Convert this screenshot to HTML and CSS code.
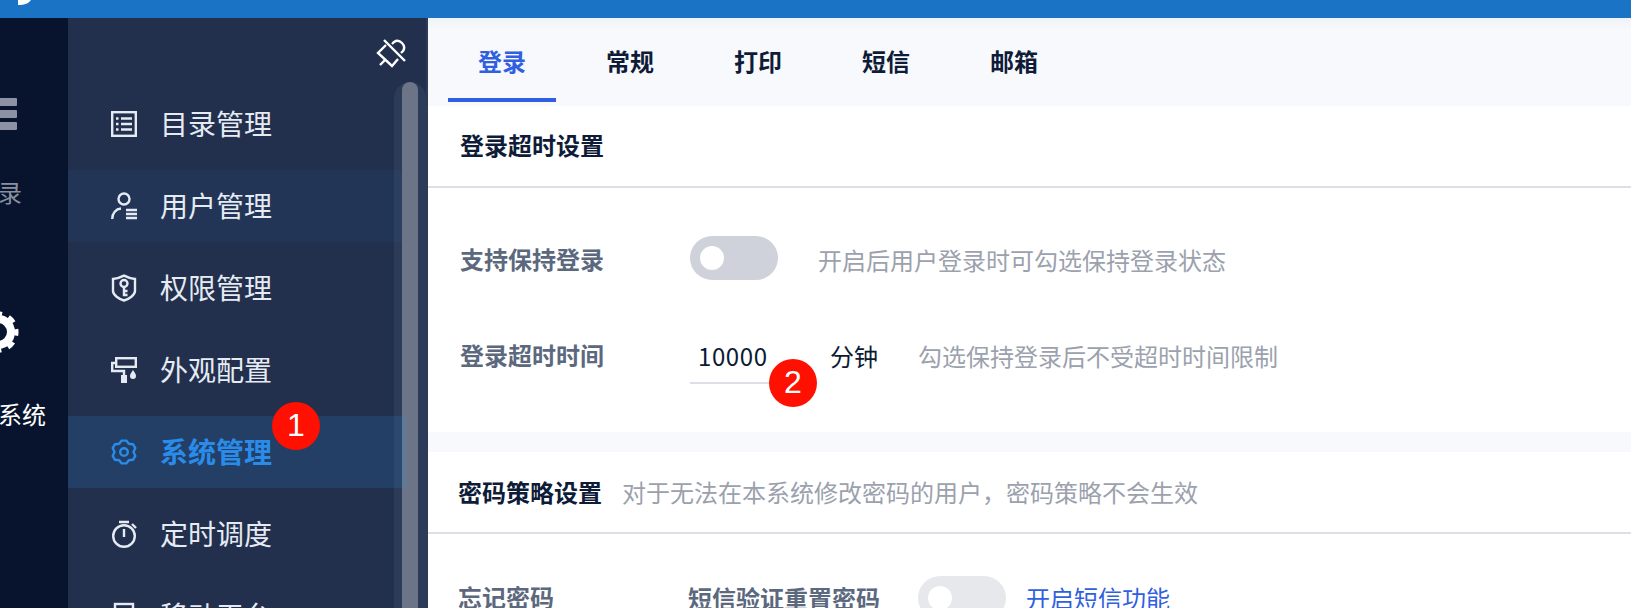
FILE: index.html
```html
<!DOCTYPE html>
<html lang="zh-CN">
<head>
    <meta charset="UTF-8">
    <meta name="viewport" content="width=device-width, initial-scale=1.0">
    <title>系统管理</title>
    <link rel="stylesheet" href="styles.css">
</head>
<body>
    <header class="topbar">
        <svg class="logo" width="14" height="6" viewBox="0 0 14 6"><path d="M0 0H13C11 3 7 5 0 5Z" fill="#fff"/></svg>
    </header>

    <div class="layout">
        <nav class="rail">
            <div class="rail-item">
                <svg width="38" height="32" viewBox="0 0 38 32" fill="#8c92a3">
                    <rect width="38" height="8" rx="1"/>
                    <rect y="12" width="38" height="8" rx="1"/>
                    <rect y="24" width="38" height="8" rx="1"/>
                </svg>
                <span class="rail-label">目录</span>
            </div>
            <div class="rail-item rail-item-active">
                <svg width="44" height="44" viewBox="0 0 44 44" fill="none" stroke="#fff">
                    <circle cx="22" cy="22" r="13" stroke-width="8"/>
                    <circle cx="22" cy="22" r="18.5" stroke-width="4" stroke-dasharray="7.26 7.26" stroke-dashoffset="3.6"/>
                </svg>
                <span class="rail-label">管理系统</span>
            </div>
        </nav>

        <aside class="panel">
            <div class="pin-row">
                <svg width="30" height="30" viewBox="4 5 30 30" fill="none" stroke="#fff" stroke-width="2.4">
                    <path d="M12 6L33 27"/>
                    <path d="M20 10L22 8C25 6 28 7 30 9C32 11 33 14 31 17L29 19"/>
                    <path d="M14 11L6 19L20 32L26 25"/>
                    <path d="M13 26L8 31"/>
                </svg>
            </div>

            <div class="scroll-track"><div class="scroll-thumb"></div></div>

            <ul class="menu">
                <li class="menu-item">
                    <svg width="26" height="26" viewBox="0 0 26 26" fill="none" stroke="currentColor" stroke-width="2.400">
                        <rect x="1.200" y="1.200" width="23.600" height="23.600"/>
                        <path d="M5 7.500H7.500M10 7.500H21M5 13H7.500M10 13H21M5 18.500H7.500M10 18.500H21"/>
                    </svg>
                    <span>目录管理</span>
                </li>
                <li class="menu-item menu-item-hover">
                    <svg width="26" height="28" viewBox="0 0 26 28" fill="none" stroke="currentColor" stroke-width="2.400">
                        <circle cx="13" cy="7" r="5.500"/>
                        <path d="M1.200 27C1.200 21 5 17 10 16.500"/>
                        <path d="M15 18H26M15 22H26M15 26H26"/>
                    </svg>
                    <span>用户管理</span>
                </li>
                <li class="menu-item">
                    <svg width="26" height="28" viewBox="0 0 26 28" fill="none" stroke="currentColor" stroke-width="2.400">
                        <path d="M2 5C7 5 10 3 13 1.500C16 3 19 5 24 5V17C24 21 18 25 13 26.500C8 25 2 21 2 17Z"/>
                        <circle cx="13" cy="9.500" r="3.500"/>
                        <path d="M13 13V21H16.500M13 17H16.500"/>
                    </svg>
                    <span>权限管理</span>
                </li>
                <li class="menu-item">
                    <svg width="26" height="26" viewBox="5 5 26 26" fill="none" stroke="currentColor" stroke-width="2.400">
                        <rect x="10.200" y="6.200" width="19.600" height="8.600"/>
                        <path d="M10 11H6.200V19H18V23"/>
                        <rect x="15" y="23" width="6" height="8" fill="currentColor" stroke="none"/>
                        <path d="M27 18C25 21 24 22 24 24A3 3 0 0 0 30 24C30 22 29 21 27 18Z" fill="currentColor" stroke="none"/>
                    </svg>
                    <span>外观配置</span>
                </li>
                <li class="menu-item menu-item-active">
                    <svg width="26" height="26" viewBox="0 0 26 26" fill="none" stroke="currentColor" stroke-width="2.400" stroke-linejoin="round">
                        <path d="M10.700 1.600H15.300L17.750 4.800L22 5.200L24.300 9.100L22.500 13L24.300 16.900L22 20.800L17.750 21.200L15.300 24.400H10.700L8.250 21.200L4 20.800L1.700 16.900L3.500 13L1.700 9.100L4 5.200L8.250 4.800Z"/>
                        <circle cx="13" cy="13" r="3.800"/>
                    </svg>
                    <span>系统管理</span>
                    <b class="badge badge-menu">1</b>
                </li>
                <li class="menu-item">
                    <svg width="26" height="28" viewBox="0 0 26 28" fill="none" stroke="currentColor" stroke-width="2.400">
                        <circle cx="13" cy="16" r="10.800"/>
                        <path d="M8 2H18M13 9V17M21 4L25 8"/>
                    </svg>
                    <span>定时调度</span>
                </li>
                <li class="menu-item">
                    <svg width="26" height="26" viewBox="0 0 26 26" fill="none" stroke="currentColor" stroke-width="2.400">
                        <rect x="4" y="1" width="18" height="24"/>
                        <path d="M4 19H22"/>
                    </svg>
                    <span>移动平台</span>
                </li>
            </ul>
        </aside>

        <main class="main">
            <div class="tabs">
                <div class="tab tab-active">登录</div>
                <div class="tab">常规</div>
                <div class="tab">打印</div>
                <div class="tab">短信</div>
                <div class="tab">邮箱</div>
            </div>

            <section class="section">
                <div class="section-head">
                    <h3>登录超时设置</h3>
                </div>
                <div class="section-body">
                    <div class="form-row">
                        <label class="form-label">支持保持登录</label>
                        <span class="switch"></span>
                        <span class="hint">开启后用户登录时可勾选保持登录状态</span>
                    </div>
                    <div class="form-row">
                        <label class="form-label">登录超时时间</label>
                        <div class="number-input">
                            10000
                            <b class="badge badge-input">2</b>
                        </div>
                        <span class="unit">分钟</span>
                        <span class="hint">勾选保持登录后不受超时时间限制</span>
                    </div>
                </div>
            </section>

            <section class="section section-password">
                <div class="section-head">
                    <h3>密码策略设置</h3>
                    <span class="head-hint">对于无法在本系统修改密码的用户，密码策略不会生效</span>
                </div>
                <div class="section-body">
                    <div class="form-row">
                        <label class="form-label">忘记密码</label>
                        <label class="form-sublabel">短信验证重置密码</label>
                        <span class="switch switch-disabled"></span>
                        <a class="link">开启短信功能</a>
                    </div>
                </div>
            </section>
        </main>
    </div>
</body>
</html>
```

FILE: styles.css
```css
* {
    box-sizing: border-box;
}

html,
body {
    margin: 0;
    height: 608px;
    overflow: hidden;
}

body {
    font-family: "Noto Sans CJK SC", "Noto Sans", sans-serif;
    font-size: 24px;
    background: #f8f9fd;
}

.topbar {
    height: 18px;
    padding-left: 18px;
    background: #1a73c5;
    overflow: hidden;
}

.logo {
    display: block;
}

.layout {
    display: flex;
    height: 590px;
}

/* left icon rail, cut off by the window edge */
.rail {
    width: 68px;
    flex-shrink: 0;
    padding-top: 80px;
    overflow: hidden;
    background: #08142e;
}

.rail-item {
    width: 96px;
    margin-left: -50px;
    display: flex;
    flex-direction: column;
    align-items: center;
    color: #8a909f;
}

.rail-item-active {
    margin-top: 102px;
    color: #fff;
}

.rail-item svg {
    display: block;
}

.rail-label {
    margin-top: 46px;
    line-height: 32px;
    white-space: nowrap;
}

.rail-item-active .rail-label {
    margin-top: 44px;
}

/* second level menu */
.panel {
    position: relative;
    width: 360px;
    flex-shrink: 0;
    overflow: hidden;
    background: #22304e;
}

.pin-row {
    display: flex;
    justify-content: flex-end;
    height: 70px;
    padding: 21px 22px 0 0;
}

.scroll-track {
    position: absolute;
    top: 64px;
    left: 326px;
    bottom: 0;
    width: 32px;
    border-radius: 16px 16px 0 0;
    background: #2c3b58;
}

.scroll-thumb {
    position: absolute;
    top: 0;
    left: 8px;
    bottom: 0;
    width: 16px;
    border-radius: 8px 8px 0 0;
    background: #6c7588;
}

.panel::after {
    content: "";
    position: absolute;
    top: 0;
    right: 0;
    bottom: 0;
    width: 2px;
    background: #2c3b58;
}

.menu {
    position: relative;
    display: flex;
    flex-direction: column;
    gap: 10px;
    width: 338px;
    margin: 0;
    padding: 0;
    list-style: none;
}

.menu-item {
    position: relative;
    display: flex;
    align-items: center;
    flex-shrink: 0;
    gap: 23px;
    height: 72px;
    padding-left: 43px;
    font-size: 28px;
    color: #e6ebf3;
}

.menu-item span {
    margin-top: -3px;
}

.menu-item svg {
    flex-shrink: 0;
    overflow: visible;
}

.menu-item-hover {
    background: rgba(42, 140, 232, 0.06);
    margin-right: 4px;
}

.menu-item-active {
    z-index: 2;
    font-weight: 700;
    color: #2a8ce8;
    background: rgba(42, 140, 232, 0.16);
}

.badge {
    position: absolute;
    width: 48px;
    height: 48px;
    border-radius: 50%;
    font-family: "Liberation Sans", sans-serif;
    font-size: 32px;
    font-weight: 400;
    line-height: 47px;
    text-align: center;
    color: #fff;
    background: #ff1000;
}

.badge-menu {
    top: -14px;
    left: 204px;
}

.badge-input {
    top: 27px;
    left: 79px;
    letter-spacing: 0;
}

/* content */
.main {
    flex: 1;
    min-width: 0;
}

.tabs {
    display: flex;
    gap: 20px;
    height: 88px;
    padding: 4px 0 4px 20px;
    background: linear-gradient(#f1f2f5, #f8f9fd 12px);
}

.tab {
    width: 108px;
    height: 80px;
    font-weight: 700;
    line-height: 77px;
    text-align: center;
    color: #0e1c38;
}

.tab-active {
    color: #3060e0;
    border-bottom: 4px solid #3060e0;
}

.section {
    background: #fff;
}

.section-head {
    display: flex;
    align-items: center;
    height: 82px;
    padding: 0 32px 2px;
    border-bottom: 2px solid #dcdfe6;
}

.section-head h3 {
    margin: -2px 0 0;
    font-size: 24px;
    font-weight: 700;
    color: #0e1c38;
}

.head-hint {
    margin-left: 20px;
    color: #9ba1ad;
}

.section-body {
    display: flex;
    flex-direction: column;
    gap: 48px;
    padding: 48px 32px 52px;
}

.form-row {
    display: flex;
    align-items: flex-start;
    height: 48px;
    line-height: 48px;
}

.form-label {
    width: 230px;
    flex-shrink: 0;
    font-weight: 700;
    line-height: 45px;
    color: #5b687e;
}

.form-sublabel {
    width: 230px;
    flex-shrink: 0;
    font-weight: 700;
    line-height: 47px;
    color: #5b687e;
}

.switch {
    position: relative;
    width: 88px;
    height: 44px;
    flex-shrink: 0;
    border-radius: 22px;
    background: #cfd2da;
}

.switch::after {
    content: "";
    position: absolute;
    top: 10px;
    left: 10px;
    width: 24px;
    height: 24px;
    border-radius: 50%;
    background: #fff;
}

.switch-disabled {
    margin-top: 2px;
    background: #e6e8ec;
}

.hint {
    margin-left: 40px;
    color: #9ba1ad;
}

.number-input {
    position: relative;
    width: 100px;
    height: 52px;
    padding-left: 8px;
    border-bottom: 2px solid #dcdfe6;
    letter-spacing: 0.6px;
    color: #0b1a33;
}

.unit {
    margin-left: 40px;
    color: #0b1a33;
}

.link {
    margin-left: 20px;
    color: #3060e0;
}

.section-password {
    margin-top: 20px;
}

.section-password .section-head {
    height: 82px;
    padding-left: 30px;
}

.section-password .section-head h3 {
    margin-top: 0;
}

.section-password .head-hint {
    margin-left: 20px;
}

.section-password .section-body {
    padding: 40px 30px 0;
}
```
